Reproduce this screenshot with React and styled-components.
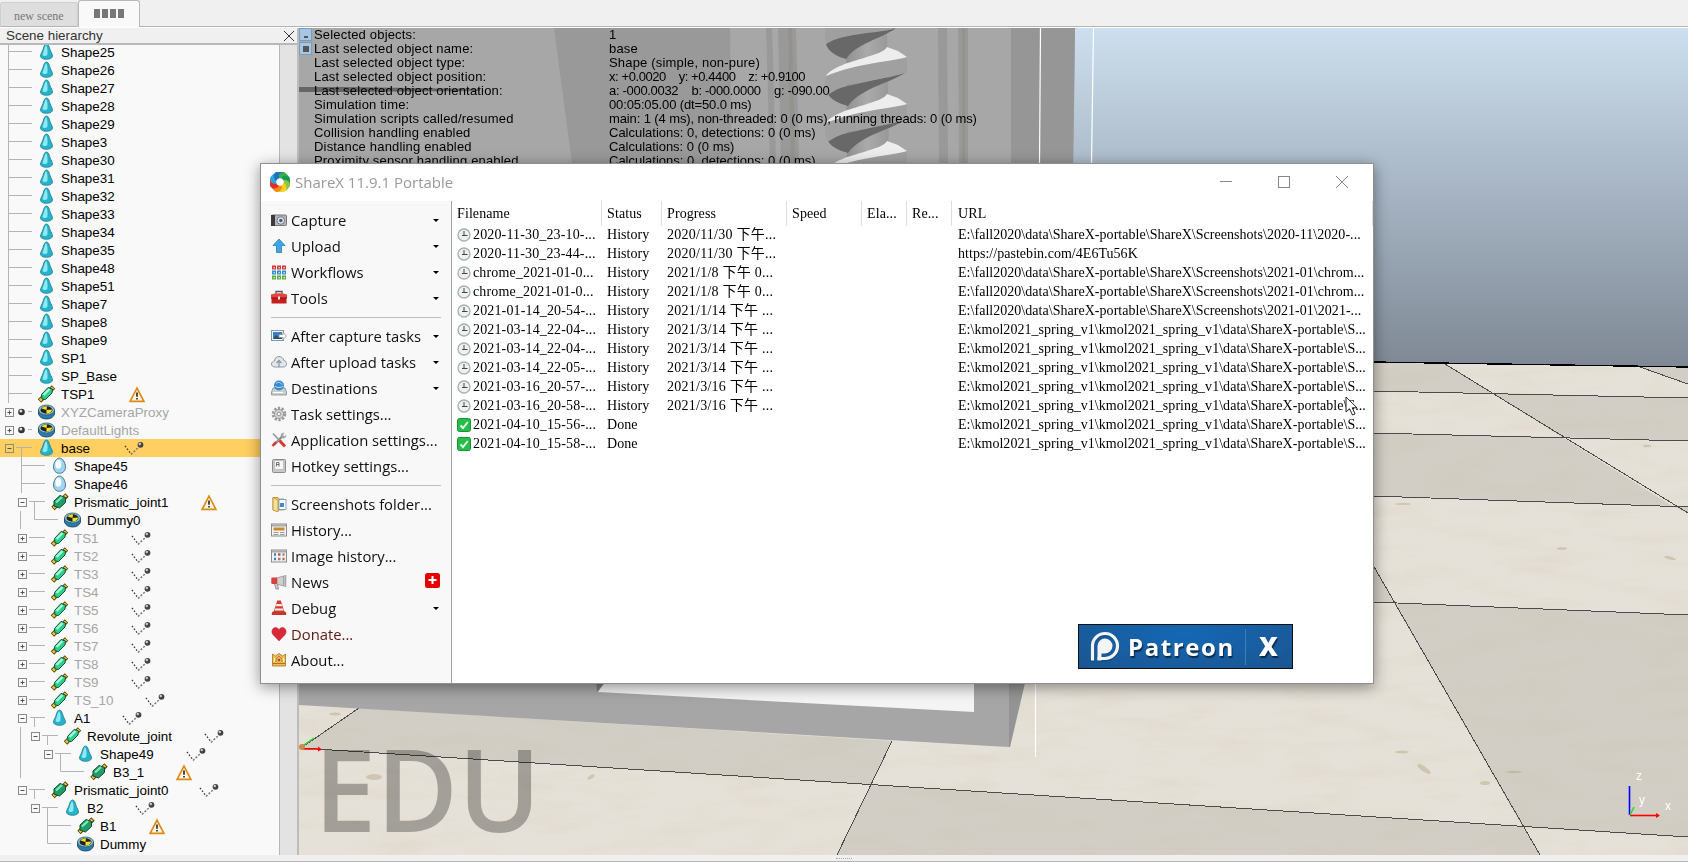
import React from "react";
import styled, { createGlobalStyle } from "styled-components";

const Global = createGlobalStyle`
  * { box-sizing: border-box; }
  body { margin: 0; background: #f0f0f0; overflow: hidden; }
  svg { display: block; flex: none; }
`;

const App_ = styled.div`
  position: relative;
  width: 1688px;
  height: 862px;
  display: flex;
  flex-direction: column;
  overflow: hidden;
  background: #f0f0f0;
  font-family: "Liberation Sans", sans-serif;
  color: #000;
`;

/* ---------- scene tabs ---------- */
const TabBar = styled.div`
  display: flex;
  align-items: flex-end;
  height: 28px;
  flex: none;
  border-bottom: 1px solid #fff;
  box-shadow: inset 0 -1px 0 #b4b4b4;
`;
const Tab = styled.div`
  width: ${(p) => p.$w}px;
  height: ${(p) => (p.$active ? 27 : 25)}px;
  display: flex;
  align-items: center;
  justify-content: ${(p) => (p.$active ? "center" : "flex-start")};
  gap: 2px;
  padding: ${(p) => (p.$active ? "0 0 2px" : "3px 0 0 13px")};
  border: 1px solid ${(p) => (p.$active ? "#b9b9b9" : "#cfcfcf")};
  border-bottom: ${(p) => (p.$active ? "none" : "1px solid #b4b4b4")};
  border-radius: 3px 3px 0 0;
  background: ${(p) => (p.$active ? "#f9f9f9" : "#dedede")};
  font: 12px "Liberation Serif", serif;
  color: #787878;
`;
const TabBlock = styled.i`
  width: 6px;
  height: 9px;
  background: #777;
`;

/* ---------- body ---------- */
const Body = styled.div`
  display: flex;
  height: 827px;
  flex: none;
`;
const Footer = styled.div`
  flex: 1;
  display: flex;
  justify-content: center;
  padding-top: 3px;
  background: #f0f0f0;
  border-bottom: 1px solid #b4b4b4;
`;
const Grip = styled.div`
  width: 16px;
  height: 1px;
  border-top: 1px dotted #aaa;
`;

const Panel = styled.div`
  width: 299px;
  flex: none;
  display: flex;
  flex-direction: column;
  border-right: 2px solid #bcbcbc;
  background: #f9f9f9;
`;
const PanelHead = styled.div`
  height: 17px;
  flex: none;
  display: flex;
  align-items: center;
  justify-content: space-between;
  padding: 0 2px 0 6px;
  background: #f0f0f0;
  border-bottom: 2px solid #b8b8b8;
  font-size: 13.4px;
  color: #333;
`;
const PanelBody = styled.div`
  flex: 1;
  min-height: 0;
  display: flex;
`;
const Tree = styled.div`
  width: 280px;
  overflow: hidden;
  border-right: 1px solid #b8b8b8;
`;
const TreeRows = styled.div`
  margin-top: -2px;
`;
const Scroller = styled.div`
  flex: 1;
  background: #e3e3e3;
`;
const Row = styled.div`
  height: 18px;
  display: flex;
  align-items: center;
  background: ${(p) => (p.$selected ? "#ffcf5f" : "none")};
`;
const Label = styled.span`
  margin-left: 5px;
  width: ${(p) => p.$w || "auto"};
  flex: none;
  white-space: nowrap;
  font-size: 13.4px;
  line-height: 18px;
  padding-top: 1px;
  color: ${(p) => (p.$dim ? "#a6a6a6" : "#000")};
`;

function Toggle({ x, plus }) {
  return (
    <g stroke="#8a8a8a" fill="none">
      <rect x={x - 4} y="5.5" width="8" height="8" />
      <path d={`M${x - 2} 9.5h4`} stroke="#555" />
      {plus && <path d={`M${x} 7.5v4`} stroke="#555" />}
    </g>
  );
}

function Gutter({ width, lines, box, plus, ball }) {
  return (
    <svg width={width} height="18">
      {lines && <path d={lines} stroke="#b4b4b4" fill="none" />}
      {box && <Toggle x={box} plus={plus} />}
      {ball && (
        <g>
          <circle cx="21.5" cy="9" r="3.3" fill="#333" />
          <circle cx="20.9" cy="8" r="1.5" fill="#ddd" />
        </g>
      )}
    </svg>
  );
}

const treeIcons = {
  shape: (
    <g>
      <path d="M8 1C6 1 5.300 4 4.500 6.500 3.800 9 2 11 2 13c0 2 2.800 3.300 6 3.300s6-1.300 6-3.300c0-2-1.800-4-2.500-6.500C10.700 4 10 1 8 1z" fill="#23b4ca" stroke="#2d7f93" strokeWidth=".9" />
      <path d="M7.500 2C6 4 5.800 7 4 11.500c.8 2 3.500 2 4.800.5C9.500 8 9 4 7.500 2z" fill="#8ceaf3" />
    </g>
  ),
  egg: (
    <g>
      <path d="M8 1C4.800 1 2 6 2 9.800 2 13.800 4.600 16.300 8 16.300s6-2.500 6-6.500C14 6 11.200 1 8 1z" fill="#9fd4ee" stroke="#3a6a86" strokeWidth=".9" />
      <ellipse cx="6.800" cy="7.300" rx="3" ry="4.500" fill="#fff" opacity=".9" />
    </g>
  ),
  joint: (
    <g>
      <path d="M1 16l4-4M12 5l3-3" stroke="#57430c" strokeWidth="4.800" />
      <path d="M1.500 15.500l4-4M12.500 4.500l2-2" stroke="#f1c62c" strokeWidth="3" />
      <path d="M3 9.500L9.500 2.500l4.500 1.500-.5 4-6.500 6.500-3.500-.5z" fill="#2bd08f" stroke="#12513c" />
      <path d="M5 10l6-6" stroke="#a9f7da" strokeWidth="2.400" />
    </g>
  ),
  prism: (
    <g>
      <path d="M1.500 15.500l3-3M13 4.500l2.500-2.500" stroke="#57430c" strokeWidth="4.800" />
      <path d="M2 15l3-3M13.200 4l1.500-1.500" stroke="#f1c62c" strokeWidth="2.600" />
      <path d="M2.500 8L8.500 2.500l5.500 2v5l-6 5.500-5.500-2z" fill="#219c66" stroke="#114732" />
      <path d="M4.500 9.500l6-5.500" stroke="#7eeabc" strokeWidth="2.200" />
    </g>
  ),
  dummy: (
    <g>
      <path d="M0 7v4c1 3.300 4 5 8 5s7-1.700 8-5V7z" fill="#2a7cb0" stroke="#15384f" strokeWidth=".8" />
      <ellipse cx="8" cy="7" rx="8" ry="5" fill="#8fc4cf" stroke="#2b5666" strokeWidth=".8" />
      <ellipse cx="8" cy="7" rx="6" ry="3.700" fill="#222" />
      <path d="M8 7L3 5.500C4.500 3.500 7 3.300 8.500 3.400zM8 7l5.500-.5C13.500 9 10.500 10.600 8 10.700z" fill="#f6e21c" />
    </g>
  ),
};

function Script() {
  return (
    <svg width="21" height="18">
      <path d="M1 7l6 8" stroke="#333" strokeWidth="1.300" strokeDasharray="1.500 1.900" />
      <path d="M7 15.500l8-7.500" stroke="#777" strokeWidth="1.500" strokeDasharray="2 1.600" />
      <circle cx="16.500" cy="5.800" r="2.900" fill="#444" />
      <circle cx="15.800" cy="5" r="1.200" fill="#ccc" />
    </svg>
  );
}

function Warning() {
  return (
    <svg width="16" height="17" viewBox="0 0 15 16">
      <path d="M7.500 2L14 14.500H1z" fill="#fdf6e6" stroke="#dd8a16" strokeWidth="1.600" />
      <path d="M7.500 6v4M7.500 11.200v1.600" stroke="#222" strokeWidth="1.500" />
    </svg>
  );
}

const LEAF = "M8.500 0V18M8.500 8.500H32";
const SHAPES = ["Shape25", "Shape26", "Shape27", "Shape28", "Shape29", "Shape3", "Shape30", "Shape31", "Shape32", "Shape33", "Shape34", "Shape35", "Shape48", "Shape51", "Shape7", "Shape8", "Shape9", "SP1", "SP_Base"];
const rows = [
  ...SHAPES.map((t) => ({ t, icon: "shape", lines: LEAF })),
  { t: "TSP1", icon: "joint", lines: LEAF, w: 68, mark: "warn" },
  { t: "XYZCameraProxy", icon: "dummy", lines: "M28 8.500H32", box: 9.5, plus: true, ball: true, dim: true },
  { t: "DefaultLights", icon: "dummy", lines: "M28 8.500H32", box: 9.5, plus: true, ball: true, dim: true },
  { t: "base", icon: "shape", lines: "M16 8.500H32M21.500 8.500V18", box: 9.5, selected: true, w: 63, mark: "script" },
  { t: "Shape45", icon: "egg", d: 1, lines: "M21.500 0V18M21.500 8.500H45" },
  { t: "Shape46", icon: "egg", d: 1, lines: "M21.500 0V18M21.500 8.500H45" },
  { t: "Prismatic_joint1", icon: "prism", d: 1, lines: "M29 8.500H45M34.500 8.500V18", box: 22.5, w: 127, mark: "warn" },
  { t: "Dummy0", icon: "dummy", d: 2, lines: "M20.500 0V18M34.500 0V8.500H58" },
  ...["TS1", "TS2", "TS3", "TS4", "TS5", "TS6", "TS7", "TS8", "TS9"].map((t) => ({
    t, icon: "joint", d: 1, lines: "M29 8.500H45", box: 22.5, plus: true, dim: true, w: 57, mark: "script",
  })),
  { t: "TS_10", icon: "joint", d: 1, lines: "M29 8.500H45", box: 22.5, plus: true, dim: true, w: 71, mark: "script" },
  { t: "A1", icon: "shape", d: 1, lines: "M30 8.500H45M34.500 8.500V18", box: 22.5, w: 48, mark: "script" },
  { t: "Revolute_joint", icon: "joint", d: 2, lines: "M20.500 0V18M42 8.500H58M47.500 8.500V18", box: 35.5, w: 117, mark: "script" },
  { t: "Shape49", icon: "shape", d: 3, lines: "M20.500 0V18M55 8.500H71M60.500 8.500V18", box: 48.5, w: 86, mark: "script" },
  { t: "B3_1", icon: "prism", d: 4, lines: "M20.500 0V15M60.500 0V8.500H84", w: 63, mark: "warn" },
  { t: "Prismatic_joint0", icon: "prism", d: 1, lines: "M29 8.500H45M34.500 8.500V18", box: 22.5, w: 125, mark: "script" },
  { t: "B2", icon: "shape", d: 2, lines: "M42 8.500H58M47.500 8.500V18", box: 35.5, w: 48, mark: "script" },
  { t: "B1", icon: "prism", d: 3, lines: "M47.500 0V18M47.500 8.500H71", w: 49, mark: "warn" },
  { t: "Dummy", icon: "dummy", d: 3, lines: "M47.500 0V8.500H71" },
];

function TreeRow({ r }) {
  return (
    <Row $selected={r.selected}>
      <Gutter width={37 + Math.round((r.d || 0) * 13.1)} lines={r.lines} box={r.box} plus={r.plus} ball={r.ball} />
      <svg width="19" height="18" viewBox="-1.500 0 19 18">{treeIcons[r.icon]}</svg>
      <Label $dim={r.dim} $w={r.w && r.w + "px"}>{r.t}</Label>
      {r.mark === "script" && <Script />}
      {r.mark === "warn" && <Warning />}
    </Row>
  );
}

/* ---------- 3D view ---------- */
const View = styled.div`
  position: relative;
  flex: 1;
  min-width: 0;
  overflow: hidden;
`;
const ViewTop = styled.div`
  position: absolute;
  inset: 0 auto auto 0;
  display: flex;
`;
const MiniButtons = styled.div`
  width: 15px;
  display: flex;
  flex-direction: column;
  gap: 1px;
`;
const MiniButton = styled.div`
  width: 13px;
  height: 13px;
  display: flex;
  align-items: center;
  justify-content: center;
  background: #a5c6e4;
  border: 1px solid #7c9cbc;
  &::after {
    content: "";
    width: ${(p) => (p.$min ? 4 : 6)}px;
    height: ${(p) => (p.$min ? 2 : 6)}px;
    margin-top: ${(p) => (p.$min ? 5 : 0)}px;
    background: #555;
  }
`;
const Info = styled.div`
  display: grid;
  grid-template-columns: 295px auto;
  grid-auto-rows: 14px;
  font-size: 13px;
  line-height: 13px;
  white-space: pre;
`;
const InfoText = styled.span`
  letter-spacing: ${(p) => p.$ls ?? 0.18}px;
`;

const info = [
  ["Selected objects:", "1"],
  ["Last selected object name:", "base"],
  ["Last selected object type:", "Shape (simple, non-pure)"],
  ["Last selected object position:", "x: +0.0020    y: +0.4400    z: +0.9100", -0.42],
  ["Last selected object orientation:", "a: -000.0032    b: -000.0000    g: -090.00", -0.31],
  ["Simulation time:", "00:05:05.00 (dt=50.0 ms)", -0.13],
  ["Simulation scripts called/resumed", "main: 1 (4 ms), non-threaded: 0 (0 ms), running threads: 0 (0 ms)", -0.11],
  ["Collision handling enabled", "Calculations: 0, detections: 0 (0 ms)", 0],
  ["Distance handling enabled", "Calculations: 0 (0 ms)", -0.02],
  ["Proximity sensor handling enabled", "Calculations: 0, detections: 0 (0 ms)", 0],
];

function Thread({ y }) {
  return (
    <g transform={`translate(0 ${y})`}>
      <path d="M828 47C838 38 866 37 906 25 892 36 862 40 848 59 840 57 830 52 828 47z" fill="#686868" />
      <path d="M826 30C842 18 872 15 907 10V25C888 33 850 34 840 41 834 44 830 46 828 48 825 42 824 36 826 30z" fill="#a0a0a0" />
      <path d="M826 29C832 20 850 15 864 11 876 7 884 5 887 0L898 4 907 10C890 15 858 16 826 29z" fill="#ededed" />
    </g>
  );
}

function Scene() {
  const light = "#e6e1d8";
  const dark = "#d2cec5";
  return (
    <svg width="1389" height="827" viewBox="299 28 1389 827">
      <defs>
        <linearGradient id="sky" x1="0" y1="28" x2="0" y2="365" gradientUnits="userSpaceOnUse">
          <stop offset="0" stopColor="#cddfee" />
          <stop offset=".5" stopColor="#a5b3c2" />
          <stop offset="1" stopColor="#7f8995" />
        </linearGradient>
        <linearGradient id="shaft" x1="845" x2="889" y1="0" y2="0" gradientUnits="userSpaceOnUse">
          <stop offset="0" stopColor="#8f8f8f" />
          <stop offset=".5" stopColor="#aaa" />
          <stop offset="1" stopColor="#989898" />
        </linearGradient>
        <filter id="marble" x="0" y="0" width="1" height="1">
          <feTurbulence type="fractalNoise" baseFrequency=".014 .06" numOctaves="5" seed="8" />
          <feColorMatrix values="0 0 0 0 .6  0 0 0 0 .54  0 0 0 0 .42  1.600 0 0 0 -.72" />
        </filter>
      </defs>
      <rect x="299" y="28" width="1389" height="340" fill="url(#sky)" />
      <path d="M299 345L1373 362 1688 367V855H299z" fill={light} />
      <g fill={dark}>
        <path d="M1373 362L1445 364 1492 393 1300 390V361z" />
        <path d="M1640 367H1688V384z" />
        <path d="M1492 393L1688 398V441L1562 437z" />
        <path d="M1300 432L1562 437 1672 506 1300 493z" />
        <path d="M1672 506L1688 507V513z" />
        <path d="M1373 565L1394 603 1300 600V565z" />
        <path d="M1394 603L1688 615V837L1523 827z" />
        <path d="M359 708L892 741 871 785 301 748z" />
        <path d="M871 785L1523 827 1540 855H837z" />
      </g>
      <rect x="299" y="368" width="1389" height="487" filter="url(#marble)" opacity=".3" />
      <g fill="#a08f5a" opacity=".32">
        <ellipse cx="1402" cy="752" rx="7" ry="1.500" />
        <ellipse cx="1424" cy="769" rx="8" ry="2.500" transform="rotate(35 1424 769)" />
        <ellipse cx="1485" cy="783" rx="5" ry="2" />
        <ellipse cx="1562" cy="548.500" rx="5" ry="1.300" />
        <ellipse cx="1670" cy="558" rx="6" ry="1.500" transform="rotate(15 1670 558)" />
        <ellipse cx="1647" cy="446" rx="4" ry="1.200" />
        <ellipse cx="1403" cy="504" rx="8" ry="1" />
        <ellipse cx="1514" cy="772" rx="8" ry="1.200" />
        <ellipse cx="374" cy="777" rx="8" ry="3" />
        <ellipse cx="591" cy="777" rx="4" ry="1.800" transform="rotate(-30 591 777)" />
        <ellipse cx="335" cy="714" rx="6" ry="1.500" />
      </g>
      <g stroke="#4c4c4c" fill="none" shapeRendering="crispEdges">
        <path d="M1373 362L1688 367" stroke="#000" strokeWidth="1.400" />
        <path d="M1373 391L1688 398M1373 433L1688 441M1373 496L1688 507M1373 602L1688 615M301 748L1688 837" />
        <path d="M1445 364L1688 513M1640 367L1688 384M1373 565L1540 855M892 741L837 855M359 708L301 748" />
      </g>

      {/* machine column */}
      <path d="M299 28H1075L1073 200H299z" fill="#a7a7a7" />
      <path d="M554 28H730L732 163H572z" fill="#999" />
      <path d="M766 28H772L776 163H770zM778 28H796L799 163H781zM938 28H947L948 163H939zM958 28H968V163H959z" fill="#999" />
      <path d="M788 28H792L795 163H791zM962 28H965V163H962z" fill="#8f8b86" opacity=".5" />
      <path d="M1011 28H1075L1073 163H1011z" fill="#969696" />
      <path d="M299 87H345L480 89V91L345 92H299z" fill="#666" />
      <path d="M846 28H887L889 163H847z" fill="url(#shaft)" />
      <path d="M825 28H895C880 34 850 36 828 44 824 40 825 34 825 28z" fill="#9f9f9f" />
      <path d="M826 44C845 32 880 34 896 28 880 40 858 42 846 59 838 57 828 52 826 44z" fill="#686868" />
      <Thread y={47} />
      <Thread y={94} />
      <Thread y={141} />
      <path d="M1040.500 28L1039.500 163M1093.500 28L1091.500 163" stroke="#fff" strokeWidth="1.200" />

      {/* machine base */}
      <path d="M299 600H1009V747L299 705z" fill="#a6a6a6" />
      <path d="M1009 600H1040L1025 683 1010 747H1009z" fill="#949494" />
      <path d="M620 660H974V712L598 692z" fill="#f4f4f4" />
      <path d="M596 680H607L597 692z" fill="#7b7b7b" />
      <path d="M1035.500 683V757" stroke="#fff" strokeWidth="1.200" />

      {/* origin axes */}
      <path d="M301 747L314 738" stroke="#2bd62b" strokeWidth="1.500" />
      <path d="M303 749H320" stroke="#f00" strokeWidth="1.500" />
      <path d="M318 746.500l4 3-4 2z" fill="#f00" />
      <circle cx="302" cy="747" r="3" fill="#c98a4a" />

      <text x="314" y="832" fontFamily="Open Sans, sans-serif" fontSize="114" fontWeight="600" textLength="227" fill="#000" fillOpacity=".29" lengthAdjust="spacingAndGlyphs">EDU</text>

      {/* orientation gizmo */}
      <path d="M1629.500 815V786" stroke="#00f" strokeWidth="1.600" />
      <path d="M1630 815.500H1659" stroke="#f00" strokeWidth="1.600" />
      <path d="M1656 813l4 2.500-4 2.500z" fill="#f00" />
      <path d="M1630 815L1634 807" stroke="#2bd62b" strokeWidth="1.500" />
      <g fill="#fff" fontFamily="Liberation Sans, sans-serif" fontSize="12">
        <text x="1636" y="780">z</text>
        <text x="1639" y="804">y</text>
        <text x="1665" y="810">x</text>
      </g>
    </svg>
  );
}

/* ---------- ShareX window ---------- */
const Window = styled.div`
  position: absolute;
  left: 260px;
  top: 163px;
  width: 1114px;
  height: 521px;
  display: flex;
  flex-direction: column;
  background: #fff;
  border: 1px solid #8f8f8f;
  box-shadow: 0 3px 14px rgba(0, 0, 0, 0.42);
`;
const TitleBar = styled.div`
  height: 37px;
  flex: none;
  display: flex;
  align-items: center;
  padding: 0 0 2px 9px;
  font-family: "Open Sans", sans-serif;
  color: #999;
`;
const TitleText = styled.span`
  flex: 1;
  margin-left: 5px;
  font-size: 15px;
`;
const WinButtons = styled.div`
  display: flex;
  gap: 46px;
  padding-right: 25px;
`;
const WinBody = styled.div`
  flex: 1;
  min-height: 0;
  display: flex;
`;
const Menu = styled.div`
  width: 191px;
  flex: none;
  padding: 6px 10px 0 10px;
  background: #f8f8f8;
  border-right: 1px solid #a0a0a0;
`;
const MenuItem = styled.div`
  height: 26px;
  display: flex;
  align-items: center;
  font: 14.8px "Open Sans", sans-serif;
  color: ${(p) => p.$color || "#111"};
  white-space: nowrap;
`;
const MenuText = styled.span`
  flex: 1;
  margin-left: 4px;
`;
const Caret = styled.i`
  width: 0;
  height: 0;
  margin-right: 2px;
  border: 3px solid transparent;
  border-top-color: #000;
  border-bottom: 0;
`;
const Divider = styled.div`
  height: 12px;
  padding-top: 6px;
  &::after {
    content: "";
    display: block;
    height: 1px;
    background: #bdbdbd;
  }
`;
const NewsBadge = styled.div`
  width: 15px;
  height: 15px;
  display: flex;
  align-items: center;
  justify-content: center;
  margin: 0 1px 4px 0;
  border-radius: 2.5px;
  background: #e50000;
`;

const menuIcons = {
  camera: (
    <g>
      <rect x=".5" y="3" width="15" height="10.500" rx="1" fill="#b4b7ba" stroke="#777" />
      <rect x="0" y="3" width="4" height="11" fill="#3b3b3b" />
      <circle cx="9.800" cy="8.500" r="3.800" fill="#dfe6ec" stroke="#777" />
      <circle cx="9.800" cy="8.500" r="1.800" fill="#3a5f94" />
    </g>
  ),
  up: <path d="M8 1L14 7.500H10.500V14.500H5.500V7.500H2z" fill="#3ea5e6" stroke="#2b7cb8" strokeWidth=".8" />,
  grid: (
    <g>
      {["#d23a3a", "#2e8fd8", "#5dae3c"].map((c, j) =>
        [1, 6, 11].map((x) => (
          <g key={c + x}>
            <rect x={x} y={1.5 + j * 5} width="4" height="4" fill={c} />
            <rect x={x + 1.5} y={3 + j * 5} width="1.400" height="1.400" fill="#fff" opacity=".75" />
          </g>
        ))
      )}
    </g>
  ),
  toolbox: (
    <g>
      <path d="M5 4V1.500h6V4" fill="none" stroke="#555" strokeWidth="1.300" />
      <path d="M0 4.500Q8 2 16 4.500V8H0z" fill="#e2463f" />
      <rect x=".5" y="8" width="15" height="5.500" fill="#c41f1c" />
      <path d="M0 8H16" stroke="#8b1010" />
      <rect x="7" y="6.500" width="2" height="3" fill="#eee" />
    </g>
  ),
  capture: (
    <g>
      <rect x=".5" y="2.500" width="12" height="10" fill="#fff" stroke="#7b98b5" />
      <rect x="2" y="4" width="9" height="7" fill="#3a7fbf" />
      <path d="M2 11l3-4 3 3 3-2v3z" fill="#25506e" />
      <path d="M8 6.500h4V4.500L15.500 8 12 11.500v-2H8z" fill="#fff" stroke="#888" strokeWidth=".8" />
    </g>
  ),
  cloud: (
    <g>
      <path d="M4 13C1.500 13 .5 11.500.5 10S2 7 3.500 7C3.500 4 6 2.500 8 2.500S12.500 4 12.700 6.500C14.500 6.500 15.500 8 15.500 9.700S14.500 13 12 13z" fill="#e3e7ec" stroke="#8e98a6" />
      <path d="M8 13V7M5.500 9L8 6.500 10.500 9" fill="none" stroke="#8e98a6" strokeWidth="1.300" />
    </g>
  ),
  drive: (
    <g>
      <path d="M2 8L.5 12v3h15v-3L14 8z" fill="#c9ced3" stroke="#868d94" strokeWidth=".8" />
      <path d="M2 12.500h10" stroke="#fff" />
      <circle cx="8" cy="5.500" r="5" fill="#3b8ad0" />
      <path d="M5 3.500c2-2 5-1 6 1M4 6c2 2 6 2 8 0" stroke="#bfe2f9" fill="none" />
    </g>
  ),
  gear: (
    <g>
      <circle cx="8" cy="8" r="6" fill="none" stroke="#999" strokeWidth="2.600" strokeDasharray="2.300 1.470" />
      <circle cx="8" cy="8" r="4.600" fill="#d2d2d2" stroke="#999" />
      <circle cx="8" cy="8" r="1.800" fill="#f8f8f8" stroke="#999" />
    </g>
  ),
  tools: (
    <g>
      <path d="M12 3.500L3 13" stroke="#8c8c8c" strokeWidth="2.400" />
      <path d="M9.500 3.500a3.200 3.200 0 0 1 4-2.500l-1.700 2 1.500 1.500 2-1.700a3.200 3.200 0 0 1-3.500 3.700z" fill="#a5a5a5" />
      <path d="M2 1.500L9 9" stroke="#999" strokeWidth="1.800" />
      <path d="M8.500 8.500l5.500 6" stroke="#d93a32" strokeWidth="3" />
      <path d="M5 10l-3.500 4" stroke="#d93a32" strokeWidth="2.500" />
    </g>
  ),
  key: (
    <g>
      <rect x="1.500" y="1.500" width="13" height="13" rx="1" fill="#c8c8c8" stroke="#8b8b8b" />
      <rect x="3.500" y="2.500" width="9" height="9" rx="1" fill="#f6f6f6" stroke="#aaa" strokeWidth=".6" />
      <path d="M5.500 8.500V4.500h2.500v4M5.500 6.500h2.500" stroke="#555" fill="none" strokeWidth=".8" />
    </g>
  ),
  folder: (
    <g>
      <path d="M2 1.500h5l1 1.500h5v11H2z" fill="#f0cc6a" stroke="#b18a2b" strokeWidth=".8" />
      <rect x="8" y="3.500" width="7" height="10" fill="#fff" stroke="#6e94bc" strokeWidth=".8" />
      <rect x="9" y="7" width="4" height="4" fill="#3f8ad2" />
      <path d="M2 1.500l5 2.500v12l-5-2z" fill="#f7e09a" stroke="#b18a2b" strokeWidth=".8" />
    </g>
  ),
  history: (
    <g>
      <rect x=".5" y="2" width="15" height="12" fill="#f3f3f3" stroke="#8c8c8c" />
      <rect x="1" y="2.500" width="14" height="2" fill="#aaa" />
      <rect x="2.500" y="5.500" width="11" height="3" fill="#c98a2c" />
      <path d="M2.500 10.500h5M9 10.500h4.500M2.500 12.500h5M9 12.500h4.500" stroke="#9a9a9a" />
    </g>
  ),
  images: (
    <g>
      <rect x=".5" y="2" width="15" height="12" fill="#f3f3f3" stroke="#8c8c8c" />
      <rect x="1" y="2.500" width="14" height="2" fill="#aaa" />
      <path d="M3 6.500h2M3 11h2" stroke="#3b7fc0" strokeWidth="2.500" />
      <path d="M7 6.500h2.500M11.500 11h2" stroke="#c9553b" strokeWidth="2.500" />
      <path d="M11.500 6.500h2M7 11h2.500" stroke="#888" strokeWidth="2.500" />
    </g>
  ),
  news: (
    <g>
      <path d="M4 4.500L12.500 2v10L4 9.500z" fill="#cfcfcf" stroke="#888" strokeWidth=".7" />
      <rect x=".3" y="3.500" width="6" height="6.500" rx="1" fill="#d94040" />
      <path d="M3.500 10l1.500 5h2.500L6.500 10" fill="#ccc" stroke="#888" strokeWidth=".8" />
      <path d="M14.300 1v12" stroke="#aaa" strokeWidth="2" />
    </g>
  ),
  cone: (
    <g>
      <path d="M6.200 .5h3.600l4 13H2.200z" fill="#dc3a2c" />
      <path d="M5.500 4h5l.7 2.300H4.800zM4.200 8.500h7.600l.6 2H3.600z" fill="#f0f0f0" />
      <path d="M.8 13l1-1.500h12.400l1 1.500v2H.8z" fill="#c93628" />
    </g>
  ),
  heart: <path d="M8 15L1.800 8.500C0 6 1 1.800 4.300 1.500 6.300 1.300 7.500 2.500 8 4c.5-1.500 1.700-2.700 3.700-2.500C15 1.800 16 6 14.200 8.500z" fill="#d8283c" stroke="#b33" strokeWidth=".5" />,
  crown: (
    <g>
      <path d="M1.500 2l3 2L8 1.500 11.500 4l3-2V14H1.500z" fill="#edbb55" stroke="#a8741d" strokeWidth=".8" />
      <path d="M1.500 11.500h13" stroke="#a8741d" />
      <path d="M5 10V7l3-3 3 3v3" stroke="#a8741d" fill="none" strokeWidth=".8" />
      <circle cx="8" cy="8" r="1.300" fill="#c33" />
      <path d="M3.500 6v4M12.500 6v4" stroke="#fff0b8" strokeWidth="1.300" />
    </g>
  ),
};

const menu = [
  ["camera", "Capture", 1], ["up", "Upload", 1], ["grid", "Workflows", 1], ["toolbox", "Tools", 1],
  null,
  ["capture", "After capture tasks", 1], ["cloud", "After upload tasks", 1], ["drive", "Destinations", 1],
  ["gear", "Task settings..."], ["tools", "Application settings..."], ["key", "Hotkey settings..."],
  null,
  ["folder", "Screenshots folder..."], ["history", "History..."], ["images", "Image history..."],
  ["news", "News", 0, 1], ["cone", "Debug", 1], ["heart", "Donate...", 0, 0, "#5c1a10"], ["crown", "About..."],
];

const List = styled.div`
  position: relative;
  flex: 1;
  font: 14px "Liberation Serif", "Noto Sans CJK TC", serif;
`;
const columns = "150px 60px 125px 75px 45px 45px 421px";
const ListHead = styled.div`
  height: 24px;
  display: grid;
  grid-template-columns: ${columns};
  line-height: 25px;
`;
const HeadCell = styled.div`
  padding-left: 5px;
  border-right: 1px solid #dedede;
  letter-spacing: 0.1px;
  &:last-child { padding-left: 6px; }
`;
const ListRow = styled.div`
  height: 19px;
  display: grid;
  grid-template-columns: ${columns};
`;
const Cell = styled.div`
  display: flex;
  align-items: center;
  gap: 2px;
  height: 19px;
  line-height: 20px;
  padding-left: 5px;
  letter-spacing: ${(p) => p.$ls ?? 0.15}px;
  white-space: nowrap;
  &:last-child { padding-left: 6px; }
`;

const F = "E:\\fall2020\\data\\ShareX-portable\\ShareX\\Screenshots\\";
const K = "E:\\kmol2021_spring_v1\\kmol2021_spring_v1\\data\\ShareX-portable\\S...";
const files = [
  ["2020-11-30_23-10-...", "2020/11/30 下午...", F + "2020-11\\2020-..."],
  ["2020-11-30_23-44-...", "2020/11/30 下午...", "https://pastebin.com/4E6Tu56K"],
  ["chrome_2021-01-0...", "2021/1/8 下午 0...", F + "2021-01\\chrom..."],
  ["chrome_2021-01-0...", "2021/1/8 下午 0...", F + "2021-01\\chrom..."],
  ["2021-01-14_20-54-...", "2021/1/14 下午 ...", F + "2021-01\\2021-..."],
  ["2021-03-14_22-04-...", "2021/3/14 下午 ...", K],
  ["2021-03-14_22-04-...", "2021/3/14 下午 ...", K],
  ["2021-03-14_22-05-...", "2021/3/14 下午 ...", K],
  ["2021-03-16_20-57-...", "2021/3/16 下午 ...", K],
  ["2021-03-16_20-58-...", "2021/3/16 下午 ...", K],
  ["2021-04-10_15-56-...", "", K],
  ["2021-04-10_15-58-...", "", K],
];

function Clock() {
  return (
    <svg width="14" height="14">
      <circle cx="7" cy="7" r="6" fill="#eef1f2" stroke="#a9afb2" strokeWidth="1.300" />
      <path d="M7 3v4.500M5 7.500h5.500" stroke="#444" fill="none" />
    </svg>
  );
}
function Done() {
  return (
    <svg width="14" height="14">
      <rect x=".5" y=".5" width="13" height="13" rx="2" fill="#27bd4c" stroke="#159238" />
      <path d="M3.500 7.500L6 10l4.800-6" stroke="#e9fbe9" strokeWidth="1.900" fill="none" />
    </svg>
  );
}

const Patreon = styled.div`
  position: absolute;
  left: 626px;
  top: 423px;
  width: 215px;
  height: 45px;
  display: flex;
  align-items: center;
  padding-left: 10px;
  border: 1px solid #111;
  background: radial-gradient(ellipse at 50% 20%, #1468b6, #1b5590);
  color: #fff;
  font: bold 24px "Open Sans", sans-serif;
  text-shadow: 1px 2px 1px rgba(0, 0, 0, 0.55);
`;
const PatreonName = styled.span`
  width: 117px;
  margin-left: 7px;
  letter-spacing: 1.6px;
`;
const PatreonX = styled.span`
  flex: 1;
  height: 36px;
  line-height: 35px;
  text-align: center;
  padding-right: 1px;
  border-left: 1px solid #3a7fb8;
  font-size: 26px;
  font-weight: 800;
`;

const Pointer = styled.svg`
  position: absolute;
  left: 1345px;
  top: 396px;
`;

function Logo() {
  const order = ["#35b04a", "#1c9a54", "#8cc63e", "#f6d21c", "#f08a1c", "#e22b2b", "#2aa7de", "#1f6fc4"];
  return (
    <svg width="20" height="20" viewBox="-10 -10 20 20">
      {order.map((c, i) => (
        <path key={c} d="M0 -4.500Q2 -9.500 7 -7.500Q9 -5 9.500 -2.500Q6 -6 3.500 -2.800z" fill={c} stroke={c} transform={`rotate(${i * 45 - 20})`} />
      ))}
      <circle r="3.500" fill="#fff" />
    </svg>
  );
}

function ShareX() {
  return (
    <Window>
      <TitleBar>
        <Logo />
        <TitleText>ShareX 11.9.1 Portable</TitleText>
        <WinButtons>
          <svg width="12" height="12"><path d="M0 5.500H12" stroke="#888" /></svg>
          <svg width="12" height="12"><rect x=".5" y=".5" width="11" height="11" fill="none" stroke="#888" /></svg>
          <svg width="12" height="12"><path d="M0 0L12 12M12 0L0 12" stroke="#888" /></svg>
        </WinButtons>
      </TitleBar>
      <WinBody>
        <Menu>
          {menu.map((m, i) =>
            m ? (
              <MenuItem key={m[1]} $color={m[4]}>
                <svg width="16" height="16">{menuIcons[m[0]]}</svg>
                <MenuText>{m[1]}</MenuText>
                {m[2] ? <Caret /> : null}
                {m[3] ? (
                  <NewsBadge>
                    <svg width="9" height="9"><path d="M4.500 0V8M.5 4H8.500" stroke="#fff" strokeWidth="2" /></svg>
                  </NewsBadge>
                ) : null}
              </MenuItem>
            ) : (
              <Divider key={i} />
            )
          )}
        </Menu>
        <List>
          <ListHead>
            {["Filename", "Status", "Progress", "Speed", "Ela...", "Re...", "URL"].map((h) => (
              <HeadCell key={h}>{h}</HeadCell>
            ))}
          </ListHead>
          {files.map((f, i) => (
            <ListRow key={i}>
              <Cell>{i < 10 ? <Clock /> : <Done />}{f[0]}</Cell>
              <Cell $ls={0.05}>{i < 10 ? "History" : "Done"}</Cell>
              <Cell $ls={0.25}>{f[1]}</Cell>
              <Cell />
              <Cell />
              <Cell />
              <Cell $ls={0.035}>{f[2]}</Cell>
            </ListRow>
          ))}
          <Patreon>
            <svg width="32" height="32" viewBox="0 0 32 32">
              <path d="M3.500 30.500V16A12.500 12.500 0 1 1 16 28.500H11V16a5.200 5.200 0 1 1 5 5.500" fill="none" stroke="#0d3f70" strokeWidth="4" opacity=".5" />
              <path d="M3.500 29.500V15A12.500 12.500 0 1 1 15.500 27.500H8.500" fill="none" stroke="#f2f4f6" strokeWidth="3.200" />
              <path d="M8.500 29.500V15A7.500 7.500 0 1 1 15.500 22.500H12.500V29.500z" fill="#f2f4f6" />
            </svg>
            <PatreonName>Patreon</PatreonName>
            <PatreonX>X</PatreonX>
          </Patreon>
        </List>
      </WinBody>
    </Window>
  );
}

export default function App() {
  return (
    <App_>
      <Global />
      <TabBar>
        <Tab $w={78}>new scene</Tab>
        <Tab $w={62} $active><TabBlock /><TabBlock /><TabBlock /><TabBlock /></Tab>
      </TabBar>
      <Body>
        <Panel>
          <PanelHead>
            Scene hierarchy
            <svg width="12" height="12"><path d="M1 1L11 11M11 1L1 11" stroke="#333" /></svg>
          </PanelHead>
          <PanelBody>
            <Tree>
              <TreeRows>{rows.map((r) => <TreeRow key={r.t} r={r} />)}</TreeRows>
            </Tree>
            <Scroller />
          </PanelBody>
        </Panel>
        <View>
          <Scene />
          <ViewTop>
            <MiniButtons><MiniButton $min /><MiniButton /></MiniButtons>
            <Info>
              {info.map(([a, b, ls]) => (
                <React.Fragment key={a}>
                  <InfoText>{a}</InfoText>
                  <InfoText $ls={ls}>{b}</InfoText>
                </React.Fragment>
              ))}
            </Info>
          </ViewTop>
        </View>
      </Body>
      <Footer><Grip /></Footer>
      <ShareX />
      <Pointer width="14" height="21">
        <path d="M1 1V16L4.500 12.800 7.500 19 10 18 7.300 11.800H12z" fill="#fff" stroke="#222" />
      </Pointer>
    </App_>
  );
}
